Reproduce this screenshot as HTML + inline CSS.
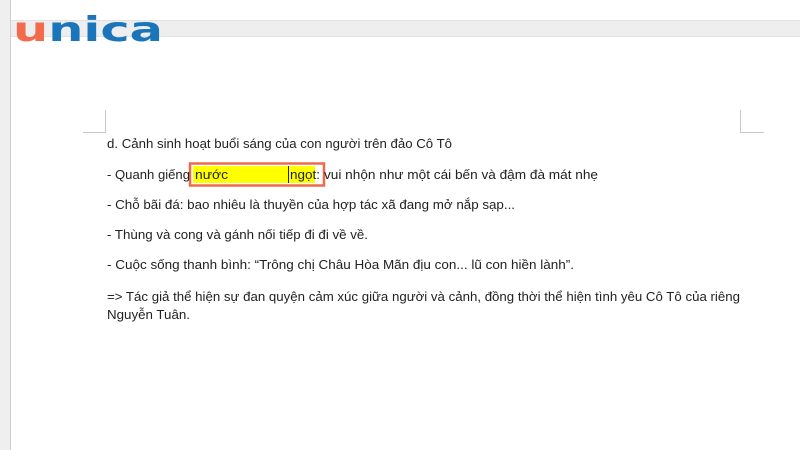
<!DOCTYPE html>
<html><head><meta charset="utf-8"><style>
body{margin:0;width:800px;height:450px;overflow:hidden;background:#fff;position:relative}
.abs{position:absolute}
</style></head><body>
<div class="abs" style="left:0;top:0;width:10px;height:450px;background:#efefef;border-right:1px solid #cfcfcf"></div>
<div class="abs" style="left:11px;top:20px;width:789px;height:15px;background:#eeeeee;border-top:1px solid #e2e2e2;border-bottom:1px solid #e2e2e2"></div>
<svg class="abs" style="left:0;top:0" width="800" height="450">
<text x="13" y="41" font-family="'DejaVu Sans',sans-serif" font-weight="bold" font-size="34" textLength="150" lengthAdjust="spacingAndGlyphs"><tspan fill="#f26b4c">u</tspan><tspan fill="#1b75bb">nica</tspan></text>
<path d="M105.5 110V132.5H83" stroke="#c8c8c8" fill="none"/>
<path d="M740.5 110V132.5H764" stroke="#c8c8c8" fill="none"/>
<rect x="193" y="166" width="95" height="17" fill="#ffff00"/>
<rect x="289" y="166" width="26" height="17" fill="#ffff00"/>
<line x1="288.5" y1="166" x2="288.5" y2="183" stroke="#222"/>
<rect x="190" y="163.5" width="134" height="22" fill="none" stroke="#ef6a4b" stroke-width="2.5"/>
<g font-family="'Liberation Sans',sans-serif" font-size="13.3" fill="#222">
<text x="107" y="148" textLength="345" lengthAdjust="spacingAndGlyphs">d. Cảnh sinh hoạt buổi sáng của con người trên đảo Cô Tô</text>
<text x="107" y="179" textLength="83" lengthAdjust="spacingAndGlyphs">- Quanh giếng</text>
<text x="195" y="179" textLength="33" lengthAdjust="spacingAndGlyphs">nước</text>
<text x="290" y="179" textLength="30" lengthAdjust="spacingAndGlyphs">ngọt:</text>
<text x="324" y="179" textLength="274" lengthAdjust="spacingAndGlyphs">vui nhộn như một cái bến và đậm đà mát nhẹ</text>
<text x="107" y="209" textLength="408" lengthAdjust="spacingAndGlyphs">- Chỗ bãi đá: bao nhiêu là thuyền của hợp tác xã đang mở nắp sạp...</text>
<text x="107" y="239" textLength="261" lengthAdjust="spacingAndGlyphs">- Thùng và cong và gánh nối tiếp đi đi về về.</text>
<text x="107" y="269" textLength="467" lengthAdjust="spacingAndGlyphs">- Cuộc sống thanh bình: “Trông chị Châu Hòa Mãn địu con... lũ con hiền lành”.</text>
<text x="107" y="301" textLength="633" lengthAdjust="spacingAndGlyphs">=&gt; Tác giả thể hiện sự đan quyện cảm xúc giữa người và cảnh, đồng thời thể hiện tình yêu Cô Tô của riêng</text>
<text x="107" y="319" textLength="83" lengthAdjust="spacingAndGlyphs">Nguyễn Tuân.</text>
</g>
</svg>
</body></html>
